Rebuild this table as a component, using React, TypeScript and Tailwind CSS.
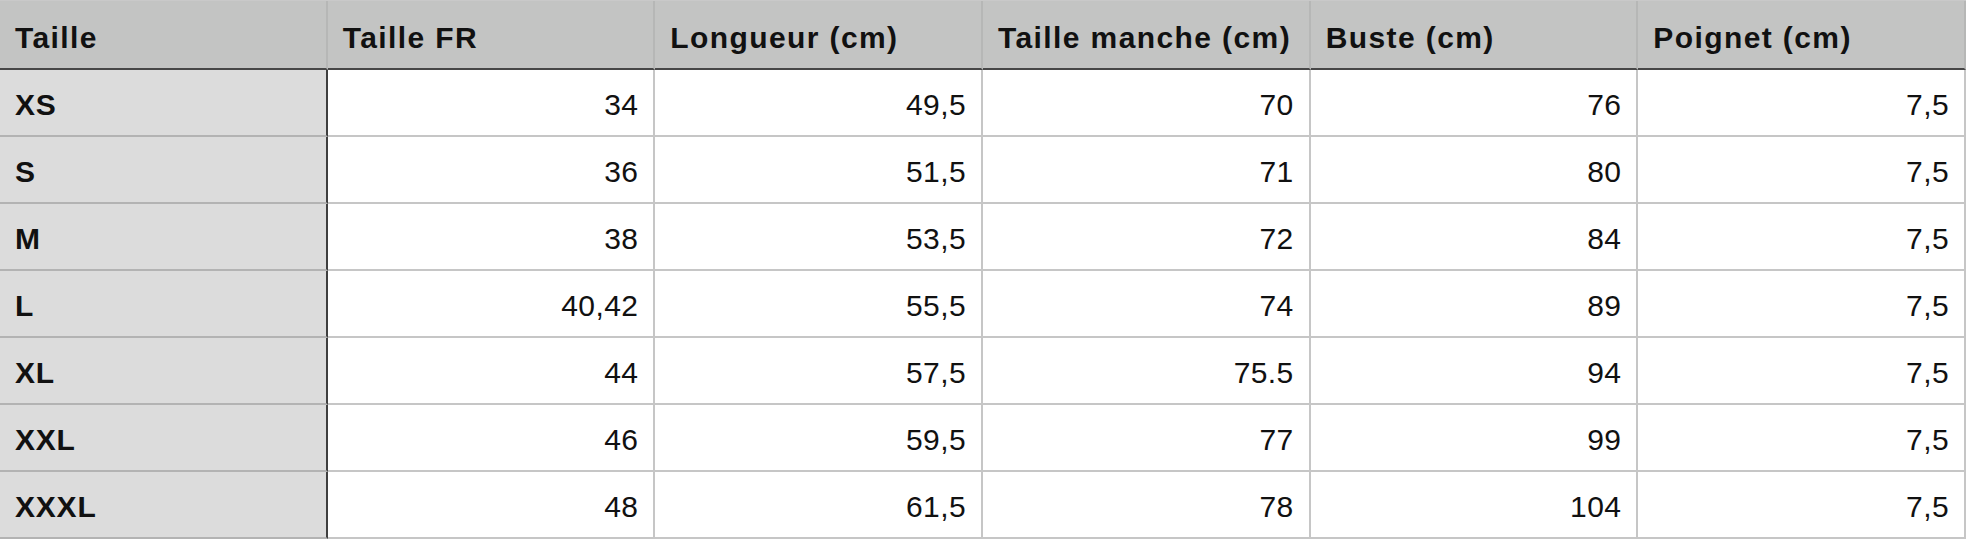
import React from "react";

const headers = [
  "Taille",
  "Taille FR",
  "Longueur (cm)",
  "Taille manche (cm)",
  "Buste (cm)",
  "Poignet (cm)",
];

const rows: string[][] = [
  ["XS", "34", "49,5", "70", "76", "7,5"],
  ["S", "36", "51,5", "71", "80", "7,5"],
  ["M", "38", "53,5", "72", "84", "7,5"],
  ["L", "40,42", "55,5", "74", "89", "7,5"],
  ["XL", "44", "57,5", "75.5", "94", "7,5"],
  ["XXL", "46", "59,5", "77", "99", "7,5"],
  ["XXXL", "48", "61,5", "78", "104", "7,5"],
];

export default function App() {
  return (
    <div
      className="w-[1966px] h-[542px] bg-white text-[30px] text-[#111]"
      style={{ fontFamily: '"Liberation Sans", Arial, sans-serif' }}
    >
      <div className="grid grid-cols-6 border-t border-[#c9c9c9]">
        {/* Header */}
        {headers.map((h) => (
          <div
            key={h}
            className="h-[69px] flex items-center pt-[6px] px-[15px] bg-[#c3c4c3] font-bold tracking-[1.4px] border-b-2 border-b-[#474747] border-r-2 border-r-[#b6b7b6]"
          >
            {h}
          </div>
        ))}

        {/* Body */}
        {rows.map((row) =>
          row.map((cell, i) =>
            i === 0 ? (
              <div
                key={row[0] + i}
                className="h-[67px] flex items-center pt-[4px] px-[15px] bg-[#dcdcdc] font-bold tracking-[0.8px] border-b-2 border-b-[#b3b3b3] border-r-2 border-r-[#3f3f3f]"
              >
                {cell}
              </div>
            ) : (
              <div
                key={row[0] + i}
                className="h-[67px] flex items-center justify-end pt-[4px] px-[15px] bg-white tracking-[0.4px] border-b-2 border-b-[#c6c6c6] border-r-2 border-r-[#c6c6c6]"
              >
                {cell}
              </div>
            )
          )
        )}
      </div>
    </div>
  );
}
